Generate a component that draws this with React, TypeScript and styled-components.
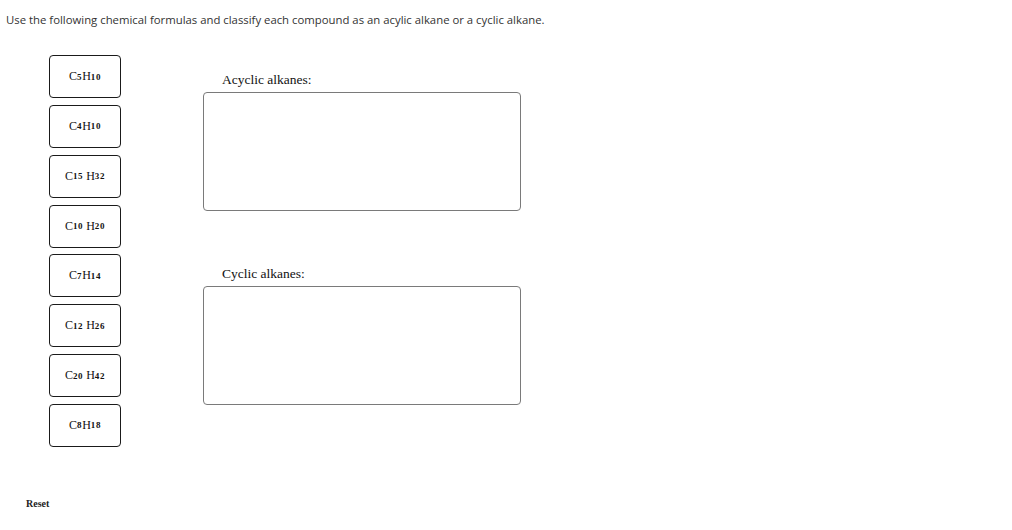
import React from "react";
import styled, { createGlobalStyle } from "styled-components";

const Global = createGlobalStyle`
  html, body { margin: 0; padding: 0; background: #fff; }
  body { font-family: "Liberation Sans", Arial, sans-serif; }
`;

const Page = styled.div`
  width: 1012px;
  height: 530px;
  box-sizing: border-box;
  padding: 13px 0 0 6px;
  display: flex;
  flex-direction: column;
`;

const Prompt = styled.p`
  margin: 0;
  font-family: "Open Sans", "Liberation Sans", sans-serif;
  font-size: 11.35px;
  line-height: 14px;
  color: #333;
`;

const Workspace = styled.div`
  display: flex;
  margin-top: 28px;
  margin-left: 43px;
  gap: 82px;
`;

const TileColumn = styled.div`
  display: flex;
  flex-direction: column;
  gap: 6.85px;
`;

const Tile = styled.div`
  width: 72px;
  height: 43px;
  box-sizing: border-box;
  border: 1.3px solid #1a1a1a;
  border-radius: 4px;
  display: flex;
  align-items: center;
  justify-content: center;
  font-family: "Liberation Serif", "DejaVu Serif", serif;
  font-size: 12px;
  color: #111;
  background: #fff;
`;

const Sub = styled.span<{ $gap?: boolean }>`
  font-size: 9px;
  font-weight: 600;
  letter-spacing: 0.6px;
  margin-right: ${(p) => (p.$gap ? "3px" : "0")};
`;

const ZoneColumn = styled.div`
  display: flex;
  flex-direction: column;
  padding-top: 17px;
  gap: 55px;
`;

const Zone = styled.div`
  display: flex;
  flex-direction: column;
  gap: 4px;
`;

const ZoneLabel = styled.div`
  padding-left: 19px;
  font-family: "Liberation Serif", "DejaVu Serif", serif;
  font-size: 13.5px;
  line-height: 16px;
  color: #111;
`;

const DropBox = styled.div`
  width: 318px;
  height: 119px;
  box-sizing: border-box;
  border: 1px solid #7a7a7a;
  border-radius: 4px;
  background: #fff;
`;

const Reset = styled.button`
  align-self: flex-start;
  margin: 51px 0 0 20px;
  padding: 0;
  border: none;
  background: none;
  font-family: "Liberation Serif", serif;
  font-weight: bold;
  font-size: 10px;
  color: #222;
  cursor: pointer;
`;

type F = { c: string; h: string; gap?: boolean };
const formulas: F[] = [
  { c: "5", h: "10" },
  { c: "4", h: "10" },
  { c: "15", h: "32", gap: true },
  { c: "10", h: "20", gap: true },
  { c: "7", h: "14" },
  { c: "12", h: "26", gap: true },
  { c: "20", h: "42", gap: true },
  { c: "8", h: "18" },
];

export default function App() {
  return (
    <>
      <Global />
      <Page>
        <Prompt>
          Use the following chemical formulas and classify each compound as an acylic alkane or a cyclic alkane.
        </Prompt>
        <Workspace>
          <TileColumn>
            {formulas.map((f, i) => (
              <Tile key={i}>
                C<Sub $gap={f.gap}>{f.c}</Sub>H<Sub>{f.h}</Sub>
              </Tile>
            ))}
          </TileColumn>
          <ZoneColumn>
            <Zone>
              <ZoneLabel>Acyclic alkanes:</ZoneLabel>
              <DropBox />
            </Zone>
            <Zone>
              <ZoneLabel>Cyclic alkanes:</ZoneLabel>
              <DropBox />
            </Zone>
          </ZoneColumn>
        </Workspace>
        <Reset>Reset</Reset>
      </Page>
    </>
  );
}
